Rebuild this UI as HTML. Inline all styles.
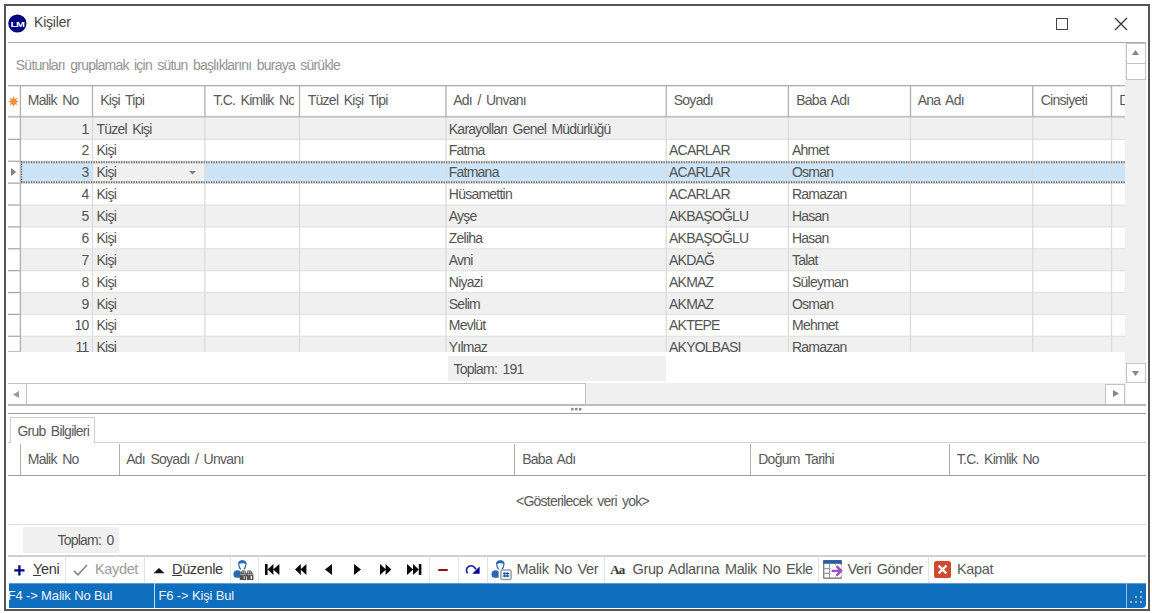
<!DOCTYPE html><html lang="tr"><head><meta charset="utf-8"><title>Kişiler</title><style>
*{box-sizing:border-box;margin:0;padding:0}
html,body{width:1152px;height:613px;background:#fff;overflow:hidden}
body{position:relative;font-family:"Liberation Sans",sans-serif;font-size:14px;color:#535353;letter-spacing:-0.77px;word-spacing:2.2px}
.a{position:absolute}
.t{position:absolute;white-space:nowrap;line-height:16px;height:16px}
.win{left:4px;top:4px;width:1146px;height:606.5px;border:2px solid #555}
.hl{height:1px;background:#a8a8a8}
.vl{width:1px;background:#a8a8a8}
.gl{width:1px;background:#e2e2e2}
.seg{font-family:"Liberation Sans",sans-serif;font-size:14.5px;letter-spacing:-0.35px;word-spacing:1.9px;color:#3a3a3a}
.sep{width:1px;background:#e3e3e3;top:557px;height:26px}
</style></head><body>
<div class="a win"></div>
<svg class="a" style="left:8px;top:14px" width="19" height="19" viewBox="0 0 19 19"><circle cx="9.4" cy="9.5" r="9.1" fill="#000080"/><text x="9.3" y="12.9" font-family="Liberation Sans, sans-serif" font-weight="bold" font-size="8" fill="#fff" text-anchor="middle" textLength="13.4" lengthAdjust="spacingAndGlyphs">LM</text></svg>
<div class="t" style="left:34px;top:13px;font-size:14px;letter-spacing:-0.2px;color:#454545;line-height:18px;height:18px">Kişiler</div>
<div class="a" style="left:1056px;top:18px;width:12px;height:12px;border:1.3px solid #444"></div>
<svg class="a" style="left:1114px;top:17px" width="14" height="14" viewBox="0 0 14 14"><path d="M1 1 L13 13 M13 1 L1 13" stroke="#3a3a3a" stroke-width="1.4" fill="none"/></svg>
<div class="a hl" style="left:8px;top:42px;width:1138px;background:#ababab"></div>
<div class="t" style="left:15.8px;top:57px;color:#939393">Sütunları gruplamak için sütun başlıklarını buraya sürükle</div>
<div class="a" style="left:8px;top:85px;width:1117.25px;height:266.9px;overflow:hidden">
<svg class="a" style="left:0;top:0" width="1120" height="270" viewBox="0 0 1120 270"><rect x="13" y="32.500" width="1110" height="21.925" fill="#f0f0f0"/><rect x="13" y="54.375" width="1110" height="21.925" fill="#fff"/><rect x="13" y="76.250" width="1110" height="21.925" fill="#cce4f7"/><rect x="13" y="98.125" width="1110" height="21.925" fill="#fff"/><rect x="13" y="120.000" width="1110" height="21.925" fill="#f0f0f0"/><rect x="13" y="141.875" width="1110" height="21.925" fill="#fff"/><rect x="13" y="163.750" width="1110" height="21.925" fill="#f0f0f0"/><rect x="13" y="185.625" width="1110" height="21.925" fill="#fff"/><rect x="13" y="207.500" width="1110" height="21.925" fill="#f0f0f0"/><rect x="13" y="229.375" width="1110" height="21.925" fill="#fff"/><rect x="13" y="251.250" width="1110" height="21.925" fill="#f0f0f0"/><rect x="84.5" y="76.250" width="112.5" height="21.875" fill="#f0f0f0"/><rect x="13" y="53.775" width="1110" height="1.25" fill="#e3e3e3"/><rect x="13" y="75.650" width="1110" height="1.25" fill="#e3e3e3"/><rect x="13" y="97.525" width="1110" height="1.25" fill="#e3e3e3"/><rect x="13" y="119.400" width="1110" height="1.25" fill="#e3e3e3"/><rect x="13" y="141.275" width="1110" height="1.25" fill="#e3e3e3"/><rect x="13" y="163.150" width="1110" height="1.25" fill="#e3e3e3"/><rect x="13" y="185.025" width="1110" height="1.25" fill="#e3e3e3"/><rect x="13" y="206.900" width="1110" height="1.25" fill="#e3e3e3"/><rect x="13" y="228.775" width="1110" height="1.25" fill="#e3e3e3"/><rect x="13" y="250.650" width="1110" height="1.25" fill="#e3e3e3"/><rect x="13" y="272.525" width="1110" height="1.25" fill="#e3e3e3"/><rect x="83.85" y="32.5" width="1.3" height="240" fill="#dcdcdc"/><rect x="196.25" y="32.5" width="1.3" height="240" fill="#dcdcdc"/><rect x="290.85" y="32.5" width="1.3" height="240" fill="#dcdcdc"/><rect x="437.35" y="32.5" width="1.3" height="240" fill="#dcdcdc"/><rect x="657.60" y="32.5" width="1.3" height="240" fill="#dcdcdc"/><rect x="779.75" y="32.5" width="1.3" height="240" fill="#dcdcdc"/><rect x="901.85" y="32.5" width="1.3" height="240" fill="#dcdcdc"/><rect x="1024.10" y="32.5" width="1.3" height="240" fill="#dcdcdc"/><rect x="1102.85" y="32.5" width="1.3" height="240" fill="#dcdcdc"/><rect x="0" y="53.775" width="12.5" height="1.25" fill="#a8a8a8"/><rect x="0" y="75.650" width="12.5" height="1.25" fill="#a8a8a8"/><rect x="0" y="97.525" width="12.5" height="1.25" fill="#a8a8a8"/><rect x="0" y="119.400" width="12.5" height="1.25" fill="#a8a8a8"/><rect x="0" y="141.275" width="12.5" height="1.25" fill="#a8a8a8"/><rect x="0" y="163.150" width="12.5" height="1.25" fill="#a8a8a8"/><rect x="0" y="185.025" width="12.5" height="1.25" fill="#a8a8a8"/><rect x="0" y="206.900" width="12.5" height="1.25" fill="#a8a8a8"/><rect x="0" y="228.775" width="12.5" height="1.25" fill="#a8a8a8"/><rect x="0" y="250.650" width="12.5" height="1.25" fill="#a8a8a8"/><rect x="13" y="76.250" width="1110" height="2" fill="#d2d8de"/><line x1="13" y1="77.250" x2="1120" y2="77.250" stroke="#77726c" stroke-width="2" stroke-dasharray="1.25 1.25"/><rect x="13" y="96.125" width="1110" height="2" fill="#d2d8de"/><line x1="13" y1="97.125" x2="1120" y2="97.125" stroke="#77726c" stroke-width="2" stroke-dasharray="1.25 1.25"/><line x1="13.600000000000001" y1="76.250" x2="13.600000000000001" y2="98.125" stroke="#5c5650" stroke-width="1.3" stroke-dasharray="1.25 1.25"/></svg>
<svg class="a" style="left:0;top:0" width="1120" height="270" viewBox="0 0 1120 270"><rect x="0" y="0" width="1120" height="32.3" fill="#fff"/><rect x="0" y="0" width="1120" height="1.3" fill="#adadad"/><rect x="0" y="30.799999999999997" width="1120" height="1.9" fill="#c2c2c2"/><rect x="11.70" y="0.5" width="1.4" height="31.5" fill="#b4b4b4"/><rect x="83.80" y="0.5" width="1.4" height="31.5" fill="#b4b4b4"/><rect x="196.20" y="0.5" width="1.4" height="31.5" fill="#b4b4b4"/><rect x="290.80" y="0.5" width="1.4" height="31.5" fill="#b4b4b4"/><rect x="437.30" y="0.5" width="1.4" height="31.5" fill="#b4b4b4"/><rect x="657.55" y="0.5" width="1.4" height="31.5" fill="#b4b4b4"/><rect x="779.70" y="0.5" width="1.4" height="31.5" fill="#b4b4b4"/><rect x="901.80" y="0.5" width="1.4" height="31.5" fill="#b4b4b4"/><rect x="1024.05" y="0.5" width="1.4" height="31.5" fill="#b4b4b4"/><rect x="1102.80" y="0.5" width="1.4" height="31.5" fill="#b4b4b4"/><rect x="11.70" y="32" width="1.4" height="236" fill="#b4b4b4"/><rect x="0" y="265.9" width="12.5" height="1.2" fill="#c0c0c0"/></svg>
<svg class="a" style="left:0.1999999999999993px;top:11.200000000000003px" width="11" height="11" viewBox="-5.5 -5.5 11 11"><g fill="#f7923a"><circle r="3.1"/><path d="M0-5.4L1.1-2.6H-1.1ZM0 5.4L1.1 2.6H-1.1ZM-5.4 0L-2.6-1.1V1.1ZM5.4 0L2.6-1.1V1.1ZM-3.8-3.8L-1 -2.6L-2.6-1ZM3.8-3.8L1-2.6L2.6-1ZM-3.8 3.8L-1 2.6L-2.6 1ZM3.8 3.8L1 2.6L2.6 1Z"/></g></svg>
<div class="t" style="left:19.7px;top:7px;color:#5a5a5a;letter-spacing:-0.72px">Malik No</div>
<div class="t" style="left:92.2px;top:7px;color:#5a5a5a;letter-spacing:-0.72px">Kişi Tipi</div>
<div class="t" style="left:205.2px;top:7px;color:#5a5a5a;letter-spacing:-0.72px;width:80.5px;overflow:hidden">T.C. Kimlik No</div>
<div class="t" style="left:299.7px;top:7px;color:#5a5a5a;letter-spacing:-0.72px">Tüzel Kişi Tipi</div>
<div class="t" style="left:445.2px;top:7px;color:#5a5a5a;letter-spacing:-0.72px">Adı / Unvanı</div>
<div class="t" style="left:665.7px;top:7px;color:#5a5a5a;letter-spacing:-0.72px">Soyadı</div>
<div class="t" style="left:788.2px;top:7px;color:#5a5a5a;letter-spacing:-0.72px">Baba Adı</div>
<div class="t" style="left:909.7px;top:7px;color:#5a5a5a;letter-spacing:-0.72px">Ana Adı</div>
<div class="t" style="left:1032.7px;top:7px;color:#5a5a5a;letter-spacing:-0.72px">Cinsiyeti</div>
<div class="t" style="left:1111.2px;top:7px;color:#5a5a5a;letter-spacing:-0.72px">Doğum Tarihi</div>
<div class="t" style="left:16px;width:64.5px;text-align:right;top:35.500px">1</div>
<div class="t" style="left:88.5px;top:35.500px">Tüzel Kişi</div>
<div class="t" style="left:440.8px;top:35.500px">Karayolları Genel Müdürlüğü</div>
<div class="t" style="left:16px;width:64.5px;text-align:right;top:57.375px">2</div>
<div class="t" style="left:88.5px;top:57.375px">Kişi</div>
<div class="t" style="left:440.8px;top:57.375px">Fatma</div>
<div class="t" style="left:661px;top:57.375px">ACARLAR</div>
<div class="t" style="left:784px;top:57.375px">Ahmet</div>
<div class="t" style="left:16px;width:64.5px;text-align:right;top:79.250px">3</div>
<div class="t" style="left:88.5px;top:79.250px">Kişi</div>
<div class="t" style="left:440.8px;top:79.250px">Fatmana</div>
<div class="t" style="left:661px;top:79.250px">ACARLAR</div>
<div class="t" style="left:784px;top:79.250px">Osman</div>
<div class="t" style="left:16px;width:64.5px;text-align:right;top:101.125px">4</div>
<div class="t" style="left:88.5px;top:101.125px">Kişi</div>
<div class="t" style="left:440.8px;top:101.125px">Hüsamettin</div>
<div class="t" style="left:661px;top:101.125px">ACARLAR</div>
<div class="t" style="left:784px;top:101.125px">Ramazan</div>
<div class="t" style="left:16px;width:64.5px;text-align:right;top:123.000px">5</div>
<div class="t" style="left:88.5px;top:123.000px">Kişi</div>
<div class="t" style="left:440.8px;top:123.000px">Ayşe</div>
<div class="t" style="left:661px;top:123.000px">AKBAŞOĞLU</div>
<div class="t" style="left:784px;top:123.000px">Hasan</div>
<div class="t" style="left:16px;width:64.5px;text-align:right;top:144.875px">6</div>
<div class="t" style="left:88.5px;top:144.875px">Kişi</div>
<div class="t" style="left:440.8px;top:144.875px">Zeliha</div>
<div class="t" style="left:661px;top:144.875px">AKBAŞOĞLU</div>
<div class="t" style="left:784px;top:144.875px">Hasan</div>
<div class="t" style="left:16px;width:64.5px;text-align:right;top:166.750px">7</div>
<div class="t" style="left:88.5px;top:166.750px">Kişi</div>
<div class="t" style="left:440.8px;top:166.750px">Avni</div>
<div class="t" style="left:661px;top:166.750px">AKDAĞ</div>
<div class="t" style="left:784px;top:166.750px">Talat</div>
<div class="t" style="left:16px;width:64.5px;text-align:right;top:188.625px">8</div>
<div class="t" style="left:88.5px;top:188.625px">Kişi</div>
<div class="t" style="left:440.8px;top:188.625px">Niyazi</div>
<div class="t" style="left:661px;top:188.625px">AKMAZ</div>
<div class="t" style="left:784px;top:188.625px">Süleyman</div>
<div class="t" style="left:16px;width:64.5px;text-align:right;top:210.500px">9</div>
<div class="t" style="left:88.5px;top:210.500px">Kişi</div>
<div class="t" style="left:440.8px;top:210.500px">Selim</div>
<div class="t" style="left:661px;top:210.500px">AKMAZ</div>
<div class="t" style="left:784px;top:210.500px">Osman</div>
<div class="t" style="left:16px;width:64.5px;text-align:right;top:232.375px">10</div>
<div class="t" style="left:88.5px;top:232.375px">Kişi</div>
<div class="t" style="left:440.8px;top:232.375px">Mevlüt</div>
<div class="t" style="left:661px;top:232.375px">AKTEPE</div>
<div class="t" style="left:784px;top:232.375px">Mehmet</div>
<div class="t" style="left:16px;width:64.5px;text-align:right;top:254.250px">11</div>
<div class="t" style="left:88.5px;top:254.250px">Kişi</div>
<div class="t" style="left:440.8px;top:254.250px">Yılmaz</div>
<div class="t" style="left:661px;top:254.250px">AKYOLBAŞI</div>
<div class="t" style="left:784px;top:254.250px">Ramazan</div>
<svg class="a" style="left:2.8000000000000007px;top:83.30000000000001px" width="6" height="8" viewBox="0 0 6 8"><path d="M0 0L5.2 4L0 8Z" fill="#808080"/></svg>
<svg class="a" style="left:180.8px;top:86px" width="7" height="4" viewBox="0 0 7 4"><path d="M0 0H7L3.5 3.4Z" fill="#808080"/></svg>
</div>
<div class="a" style="left:447.75px;top:355.6px;width:218.5px;height:25px;background:#f0f0f0"></div>
<div class="t" style="left:453.5px;top:360.5px">Toplam: 191</div>
<div class="a" style="left:1125px;top:43px;width:21px;height:340px;background:#f0f0f0"></div>
<div class="a" style="left:1125.5px;top:42.5px;width:20.5px;height:21px;background:#fff;border:1px solid #c4c4c4"></div>
<div class="a" style="left:1125.5px;top:63px;width:20.5px;height:16.5px;background:#fff;border:1px solid #c4c4c4"></div>
<svg class="a" style="left:1132px;top:50px" width="7" height="5" viewBox="0 0 7 5"><path d="M3.5 0L7 5H0Z" fill="#868686"/></svg>
<div class="a" style="left:1125.5px;top:363px;width:20.5px;height:20px;background:#fff;border:1px solid #c4c4c4"></div>
<svg class="a" style="left:1132px;top:370.5px" width="7" height="5" viewBox="0 0 7 5"><path d="M0 0H7L3.5 5Z" fill="#868686"/></svg>
<div class="a" style="left:8px;top:383.3px;width:1117.5px;height:21.5px;background:#f0f0f0"></div>
<div class="a" style="left:8px;top:383px;width:578px;height:1px;background:#c4c4c4"></div>
<div class="a" style="left:8px;top:384px;width:19px;height:20px;background:#fff;border-right:1px solid #c0c0c0"></div>
<div class="a" style="left:27px;top:384px;width:559px;height:20.5px;background:#fff;border-right:1px solid #c0c0c0"></div>
<svg class="a" style="left:12.5px;top:390.5px" width="6" height="7" viewBox="0 0 6 7"><path d="M6 0V7L0 3.5Z" fill="#9a9a9a"/></svg>
<div class="a" style="left:1105px;top:383.5px;width:20px;height:21px;background:#fff;border:1px solid #c4c4c4"></div>
<svg class="a" style="left:1112.5px;top:390px" width="6" height="7" viewBox="0 0 6 7"><path d="M0 0V7L6 3.5Z" fill="#868686"/></svg>
<div class="a" style="left:1125.5px;top:383.5px;width:21px;height:21px;background:#fff"></div>
<div class="a" style="left:8px;top:404px;width:1138px;height:2px;background:#bcbcbc"></div>
<svg class="a" style="left:570px;top:406px" width="13" height="6" viewBox="0 0 13 6"><g fill="#8a8a8a"><rect x="1.1" y="1.9" width="2.5" height="2.5"/><rect x="5" y="1.9" width="2.5" height="2.5"/><rect x="8.9" y="1.9" width="2.5" height="2.5"/></g></svg>
<div class="a hl" style="left:8px;top:413px;width:1138px;background:#a0a0a0"></div>
<div class="a" style="left:8px;top:441.5px;width:1138px;height:1.5px;background:#d2d2d2"></div>
<div class="a" style="left:10px;top:416.5px;width:85px;height:26.5px;background:#fff;border:1px solid #cfcfcf;border-bottom:none"></div>
<div class="t" style="left:17.5px;top:422.5px;color:#5a5a5a">Grub Bilgileri</div>
<div class="a vl" style="left:20px;top:444px;height:31px;background:#b0b0b0"></div>
<div class="a vl" style="left:119px;top:444px;height:31px;background:#b0b0b0"></div>
<div class="a vl" style="left:514px;top:444px;height:31px;background:#b0b0b0"></div>
<div class="a vl" style="left:750px;top:444px;height:31px;background:#b0b0b0"></div>
<div class="a vl" style="left:948.5px;top:444px;height:31px;background:#b0b0b0"></div>
<div class="a hl" style="left:8px;top:475px;width:1138px;background:#a0a0a0"></div>
<div class="t" style="left:27.7px;top:450.5px;color:#5a5a5a;letter-spacing:-0.72px">Malik No</div>
<div class="t" style="left:126.2px;top:450.5px;color:#5a5a5a;letter-spacing:-0.72px">Adı Soyadı / Unvanı</div>
<div class="t" style="left:522.2px;top:450.5px;color:#5a5a5a;letter-spacing:-0.72px">Baba Adı</div>
<div class="t" style="left:758.2px;top:450.5px;color:#5a5a5a;letter-spacing:-0.72px">Doğum Tarihi</div>
<div class="t" style="left:956.7px;top:450.5px;color:#5a5a5a;letter-spacing:-0.72px">T.C. Kimlik No</div>
<div class="t" style="left:516px;top:492.5px;color:#5a5a5a">&lt;Gösterilecek veri yok&gt;</div>
<div class="a hl" style="left:8px;top:524px;width:1138px;background:#dedede"></div>
<div class="a" style="left:23px;top:527px;width:95.5px;height:25.5px;background:#f0f0f0"></div>
<div class="t" style="left:57.5px;top:531.5px">Toplam: 0</div>
<div class="a" style="left:8px;top:555.3px;width:1138px;height:1.5px;background:#d0d0d0"></div>
<div class="a sep" style="left:65px"></div>
<div class="a sep" style="left:143.5px"></div>
<div class="a sep" style="left:229.5px"></div>
<div class="a sep" style="left:258.3px"></div>
<div class="a sep" style="left:428.5px"></div>
<div class="a sep" style="left:458px"></div>
<div class="a sep" style="left:487px"></div>
<div class="a sep" style="left:603.7px"></div>
<div class="a sep" style="left:818px"></div>
<div class="a sep" style="left:927.5px"></div>
<svg class="a" style="left:14.3px;top:565.3px" width="11" height="11" viewBox="0 0 11 11"><path d="M5.4 0.3V10.5M0.3 5.4H10.5" stroke="#000080" stroke-width="2.3" fill="none"/></svg>
<div class="t seg" style="left:33px;top:560.7px"><u>Y</u>eni</div>
<svg class="a" style="left:72.5px;top:564px" width="15" height="12" viewBox="0 0 15 12"><path d="M1 6.8L5 10.8L14 1" stroke="#8c8c8c" stroke-width="1.8" fill="none"/></svg>
<div class="t seg" style="left:95px;top:560.7px;color:#9a9a9a">Kaydet</div>
<svg class="a" style="left:152.8px;top:568px" width="12" height="6" viewBox="0 0 12 6"><path d="M6 0L11.5 5.2H0.5Z" fill="#111"/></svg>
<div class="t seg" style="left:172px;top:560.7px"><u>D</u>üzenle</div>
<svg class="a" style="left:233px;top:559.5px" width="21" height="21" viewBox="0 0 21 21"><path d="M5.7 4.4Q5.5 1 9.3 1Q13.1 1 12.9 4.4Q12.6 7.6 10.9 9.3M5.7 4.4Q6 7.6 7.7 9.3" stroke="#2a69b6" stroke-width="1.25" fill="none"/><path d="M5.2 4Q5.3 0.3 9.3 0.3Q13.3 0.3 13.4 4Q9.3 2.3 5.2 4Z" fill="#2a69b6"/><path d="M0.5 14.4Q0.5 10.2 4.8 10.2Q6.4 10.2 7.6 11.6V17.7H3.6Q0.5 17.6 0.5 14.4Z" fill="#2a69b6"/><g fill="#505050"><path d="M8.8 10.5H12.4L13.3 14V20.1H6.8V14.4Z"/><path d="M14.4 10.5H18L20.4 14.4V20.1H14V14Z"/><rect x="12.8" y="13.4" width="2" height="2.8"/></g><g fill="#c9c9c9"><rect x="9.4" y="11.2" width="0.9" height="2.2"/><rect x="11" y="11.2" width="0.9" height="2.2"/><rect x="15.2" y="11.2" width="0.9" height="2.2"/><rect x="16.8" y="11.2" width="0.9" height="2.2"/><rect x="7.2" y="14.3" width="5.6" height="0.8"/><rect x="14.4" y="14.3" width="5.6" height="0.8"/><rect x="10.6" y="16" width="1.1" height="3"/><rect x="17.6" y="16" width="1.4" height="3" fill="#f4f4f4"/></g></svg>
<svg class="a" style="left:265px;top:563.8px" width="15" height="11" viewBox="0 0 15 11"><path d="M0 0H2.6V11H0ZM8.4 0V11L2.6 5.5ZM14.4 0V11L8.2 5.5Z" fill="#0a0a0a"/></svg>
<svg class="a" style="left:295px;top:563.8px" width="11.5" height="11" viewBox="0 0 11.5 11"><path d="M5.8 0V11L0 5.5ZM11.4 0V11L5.4 5.5Z" fill="#0a0a0a"/></svg>
<svg class="a" style="left:325px;top:563.8px" width="7.2" height="11" viewBox="0 0 7.2 11"><path d="M7 0V11L0 5.5Z" fill="#0a0a0a"/></svg>
<svg class="a" style="left:354.4px;top:563.8px" width="7.2" height="11" viewBox="0 0 7.2 11"><path d="M0 0V11L7 5.5Z" fill="#0a0a0a"/></svg>
<svg class="a" style="left:380px;top:563.8px" width="11.5" height="11" viewBox="0 0 11.5 11"><path d="M0 0V11L6 5.5ZM5.6 0V11L11.4 5.5Z" fill="#0a0a0a"/></svg>
<svg class="a" style="left:406.8px;top:563.8px" width="15" height="11" viewBox="0 0 15 11"><path d="M0 0V11L6.2 5.5ZM6 0V11L11.8 5.5ZM11.8 0H14.4V11H11.8Z" fill="#0a0a0a"/></svg>
<div class="a" style="left:437.5px;top:568.8px;width:10.5px;height:2.7px;background:#9c0a0a;border-radius:1px"></div>
<svg class="a" style="left:465px;top:563.5px" width="16" height="12" viewBox="0 0 16 12"><path d="M2.4 9.4Q0 4.4 4 2.2Q8 0.6 11 5.2" stroke="#1a1aa6" stroke-width="1.6" fill="none"/><path d="M14.6 2.6V9.8H7.2Z" fill="#00008b"/></svg>
<svg class="a" style="left:491px;top:559.5px" width="22" height="21" viewBox="0 0 22 21"><path d="M5.7 4.4Q5.5 1 9.3 1Q13.1 1 12.9 4.4Q12.6 7.6 10.9 9.3M5.7 4.4Q6 7.6 7.7 9.3" stroke="#2a69b6" stroke-width="1.25" fill="none"/><path d="M5.2 4Q5.3 0.3 9.3 0.3Q13.3 0.3 13.4 4Q9.3 2.3 5.2 4Z" fill="#2a69b6"/><path d="M0.5 14.4Q0.5 10.2 4.8 10.2Q6.4 10.2 7.6 11.6V17.7H3.6Q0.5 17.6 0.5 14.4Z" fill="#2a69b6"/><rect x="9.9" y="10" width="10.2" height="9.6" rx="1.4" fill="#fff" stroke="#9c9c9c" stroke-width="1.5"/><path d="M13.7 12.3V17.4M16.3 12.3V17.4" stroke="#1f5fb0" stroke-width="1" fill="none"/><path d="M11.8 13.6H18.3M11.8 16H18.3" stroke="#1f5fb0" stroke-width="1.5" fill="none"/></svg>
<div class="t seg" style="left:516.5px;top:560.7px;color:#555">Malik No Ver</div>
<div class="t" style="left:610.3px;top:562px;font-family:'Liberation Serif',serif;font-weight:bold;font-size:13px;letter-spacing:-0.9px;color:#333">Aa</div>
<div class="t seg" style="left:632.5px;top:560.7px;color:#555">Grup Adlarına Malik No Ekle</div>
<svg class="a" style="left:823px;top:559.5px" width="20" height="20" viewBox="0 0 20 20"><rect x="0.7" y="0.7" width="17.6" height="17.6" fill="#fff" stroke="#858585" stroke-width="1.4" rx="0.8"/><rect x="0.2" y="0.2" width="18.6" height="3.6" fill="#2b5c9e"/><path d="M0.7 8.6H18.3M0.7 13.4H18.3M6.5 4V18.3M12.4 4V18.3" stroke="#9a9a9a" stroke-width="1.1" fill="none"/><rect x="7.6" y="5" width="11" height="11.5" fill="#fff"/><path d="M8.6 9.7H15.2L12.6 6.6L14.4 5.2L19.8 10.8L14.4 16.4L12.6 15L15.2 11.9H8.6Z" fill="#9a4fb8"/></svg>
<div class="t seg" style="left:847.5px;top:560.7px;color:#555">Veri Gönder</div>
<svg class="a" style="left:933.5px;top:560.7px" width="17" height="17" viewBox="0 0 17 17"><rect width="17" height="17" rx="2.6" fill="#d04a2f"/><path d="M4.6 4.6L12.4 12.4M12.4 4.6L4.6 12.4" stroke="#fff" stroke-width="2.2" fill="none"/></svg>
<div class="t seg" style="left:957px;top:560.7px;color:#5a5a5a">Kapat</div>
<div class="a" style="left:8.5px;top:583px;width:1137.7px;height:24.5px;background:#106ebe;border-bottom-right-radius:4px;overflow:hidden">
<div class="a" style="left:0;top:0;width:1140px;height:1px;background:#5f9bd6"></div>
<div class="t" style="left:-0.8px;top:5px;color:#eef4fb;font-size:13px;letter-spacing:-0.15px;word-spacing:0">F4 -&gt; Malik No Bul</div>
<div class="a" style="left:145.6px;top:0;width:1.3px;height:24.5px;background:#c4d9ef"></div>
<div class="t" style="left:150px;top:5px;color:#eef4fb;font-size:13px;letter-spacing:-0.15px;word-spacing:0">F6 -&gt; Kişi Bul</div>
<div class="a" style="left:1117px;top:0;width:1.6px;height:24.5px;background:#9dbfe3"></div>
<div class="a" style="left:1131.7px;top:7.600000000000023px;width:2.3px;height:2.3px;background:#9fb2c6"></div>
<div class="a" style="left:1126.7px;top:12.600000000000023px;width:2.3px;height:2.3px;background:#9fb2c6"></div>
<div class="a" style="left:1131.7px;top:12.600000000000023px;width:2.3px;height:2.3px;background:#9fb2c6"></div>
<div class="a" style="left:1121.7px;top:17.5px;width:2.3px;height:2.3px;background:#9fb2c6"></div>
<div class="a" style="left:1126.7px;top:17.5px;width:2.3px;height:2.3px;background:#9fb2c6"></div>
<div class="a" style="left:1131.7px;top:17.5px;width:2.3px;height:2.3px;background:#9fb2c6"></div>
</div>
</body></html>
